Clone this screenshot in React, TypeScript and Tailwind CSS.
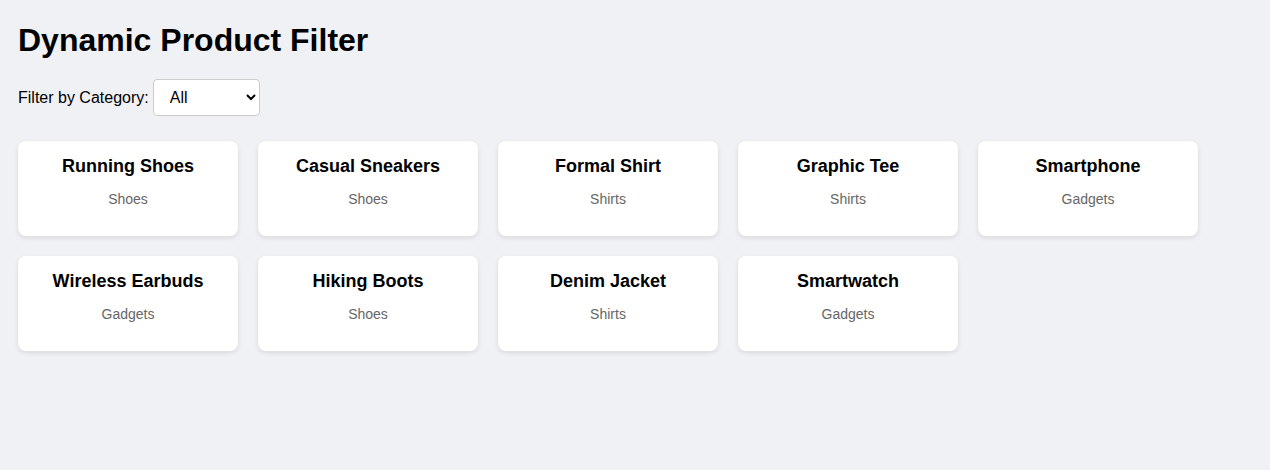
const products = [
  { name: "Running Shoes", category: "Shoes" },
  { name: "Casual Sneakers", category: "Shoes" },
  { name: "Formal Shirt", category: "Shirts" },
  { name: "Graphic Tee", category: "Shirts" },
  { name: "Smartphone", category: "Gadgets" },
  { name: "Wireless Earbuds", category: "Gadgets" },
  { name: "Hiking Boots", category: "Shoes" },
  { name: "Denim Jacket", category: "Shirts" },
  { name: "Smartwatch", category: "Gadgets" },
];

function ProductCard({ name, category }: { name: string; category: string }) {
  return (
    <div className="w-[220px] bg-white rounded-lg shadow-[0_2px_5px_rgba(0,0,0,0.1)] px-[15px] py-[15px] text-center">
      <h3 className="text-[18px] font-bold text-black leading-[21px]">{name}</h3>
      <p className="text-[14px] text-[#666] leading-[16px] my-[14px]">{category}</p>
    </div>
  );
}

export default function App() {
  return (
    <div
      className="min-h-[470px] bg-[#f0f1f5] px-[18px] pb-5"
      style={{ fontFamily: '"Liberation Sans", Arial, sans-serif' }}
    >
      <h1 className="pt-[22px] text-[32px] font-bold leading-[37px] text-black">Dynamic Product Filter</h1>
      <div className="mt-[20px] flex items-center gap-[4px] text-[16px] text-black">
        <label htmlFor="category">Filter by Category:</label>
        <select
          id="category"
          className="w-[107px] h-[37px] pl-[12px] pr-2 bg-white border border-[#ccc] rounded text-[16px]"
        >
          <option>All</option>
          <option>Shoes</option>
          <option>Shirts</option>
          <option>Gadgets</option>
        </select>
      </div>
      <div className="mt-[25px] flex flex-wrap gap-5">
        {products.map((p) => (
          <ProductCard key={p.name} name={p.name} category={p.category} />
        ))}
      </div>
    </div>
  );
}
